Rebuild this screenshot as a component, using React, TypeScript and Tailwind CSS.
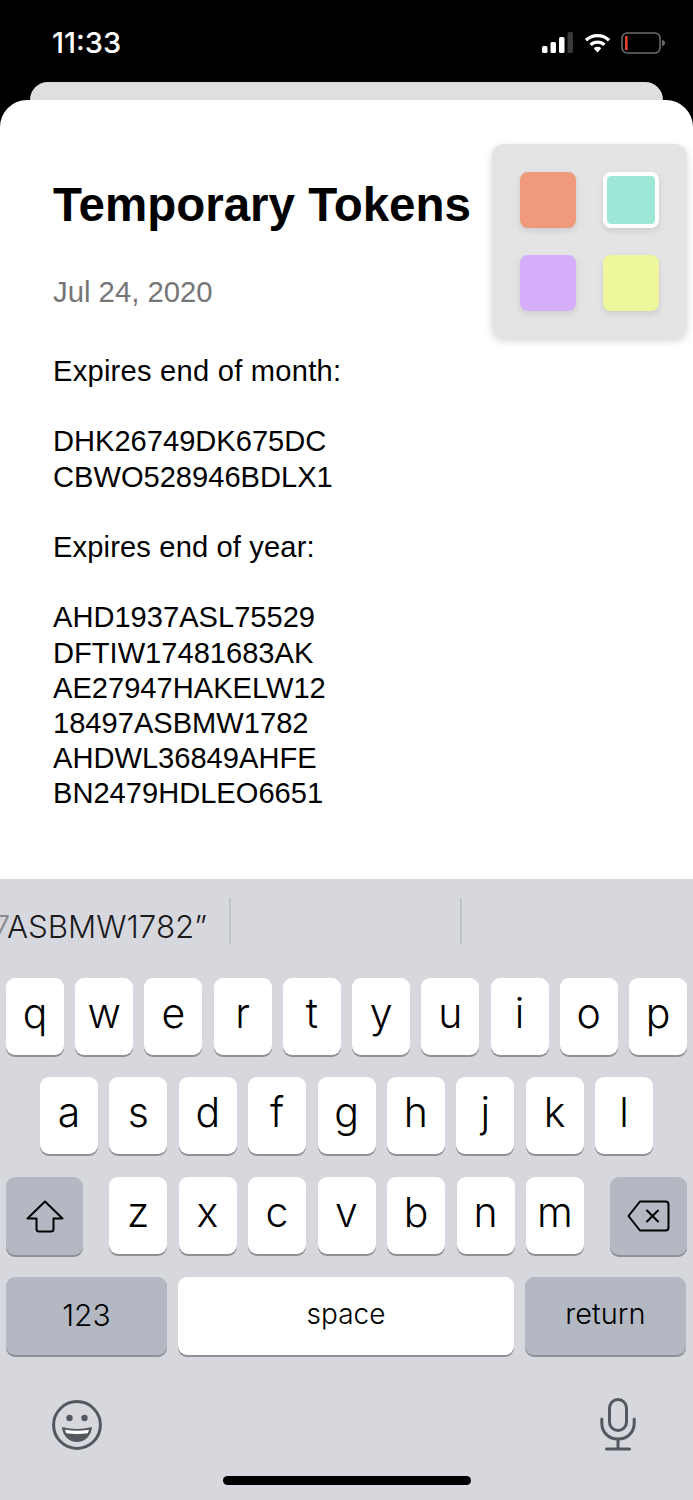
const sans = "font-['Liberation_Sans',Arial,sans-serif]";
const kbFont = "font-['Inter',sans-serif]";

const letterKey =
  "flex h-[77px] w-[58px] items-center justify-center rounded-[9px] bg-white pb-[6px] text-[41px] font-light text-black shadow-[0_2px_0_#8f9196]";
const grayKey =
  "flex h-[78px] items-center justify-center rounded-[9px] bg-[#b3b8c2] shadow-[0_2px_0_#8f9196]";

function Key({ label }: { label: string }) {
  return <div className={letterKey}>{label}</div>;
}

function StatusIcons() {
  return (
    <div className="flex items-center">
      <svg className="mr-[10px]" width="32" height="22" viewBox="0 0 32 22">
        <rect x="0" y="14" width="5.5" height="7" rx="1.5" fill="#fff" />
        <rect x="8.500" y="10" width="5.500" height="11" rx="1.5" fill="#fff" />
        <rect x="17" y="5" width="5.500" height="16" rx="1.5" fill="#fff" />
        <rect x="25.500" y="0" width="5.500" height="21" rx="1.5" fill="#3a3a3c" />
      </svg>
      <svg className="mr-[10px]" width="27" height="20" viewBox="0 0 24 18" fill="none" stroke="#fff" strokeWidth="3">
        <path d="M1.600 6.500a15 15 0 0 1 20.800 0" />
        <path d="M5.800 10.700a9 9 0 0 1 12.400 0" />
        <path d="M12 17.500l-3.400-3.800a5 5 0 0 1 6.800 0z" fill="#fff" stroke="none" />
      </svg>
      <svg width="44" height="22" viewBox="0 0 44 22" fill="none">
        <rect x="1" y="1" width="38" height="20" rx="5" stroke="#6c6c6e" strokeWidth="1.6" />
        <rect x="4" y="4" width="2.600" height="14" fill="#e5432f" />
        <path d="M41 8c2 .4 3 1.600 3 3s-1 2.600-3 3z" fill="#6c6c6e" />
      </svg>
    </div>
  );
}

function Swatch({ color, active }: { color: string; active?: boolean }) {
  return (
    <div
      className={`h-[56px] w-[56px] rounded-[8px] shadow-[0_3px_6px_rgba(0,0,0,0.1)] ${color} ${
        active ? "border-[4px] border-white" : ""
      }`}
    />
  );
}

const row1 = ["q", "w", "e", "r", "t", "y", "u", "i", "o", "p"];
const row2 = ["a", "s", "d", "f", "g", "h", "j", "k", "l"];
const row3 = ["z", "x", "c", "v", "b", "n", "m"];

export default function App() {
  return (
    <div className={`relative flex h-[1500px] w-[693px] flex-col overflow-hidden bg-black ${sans}`}>
      <div className="flex h-[82px] shrink-0 items-start justify-between pl-[52px] pr-[28px] pt-[26px]">
        <span className={`text-[29px] font-medium leading-[34px] text-white ${kbFont}`}>11:33</span>
        <div className="pt-[6px]">
          <StatusIcons />
        </div>
      </div>

      <div className="mx-[30px] h-[18px] shrink-0 rounded-t-[20px] bg-[#dfdfdf]" />

      <div className="relative flex h-[779px] shrink-0 flex-col rounded-t-[27px] bg-white pl-[53px] pt-[77px]">
        <h1 className="text-[47.500px] font-bold leading-[56px] text-black">Temporary Tokens</h1>
        <p className="mt-[41px] text-[29.300px] leading-[35px] text-[#767676]">Jul 24, 2020</p>
        <div className="mt-[45px] text-[29.100px] leading-[35.200px] text-black">
          <p className="tracking-[0.25px]">Expires end of month:</p>
          <p className="mt-[35.200px]">DHK26749DK675DC</p>
          <p>CBWO528946BDLX1</p>
          <p className="mt-[35.200px] tracking-[0.15px]">Expires end of year:</p>
          <p className="mt-[35.200px]">AHD1937ASL75529</p>
          <p>DFTIW17481683AK</p>
          <p>AE27947HAKELW12</p>
          <p>18497ASBMW1782</p>
          <p>AHDWL36849AHFE</p>
          <p>BN2479HDLEO6651</p>
        </div>

        <div className="absolute left-[492px] top-[44px] grid h-[194px] w-[195px] grid-cols-[56px_56px] content-start gap-x-[27px] gap-y-[27px] rounded-[12px] bg-[#e4e4e4] pl-[28px] pt-[28px] shadow-[0_3px_8px_rgba(0,0,0,0.16)]">
          <Swatch color="bg-[#f0997c]" />
          <Swatch color="bg-[#9ee7d7]" active />
          <Swatch color="bg-[#d5aefb]" />
          <Swatch color="bg-[#eef79b]" />
        </div>
      </div>

      <div className={`relative flex flex-1 flex-col bg-[#d6d8de] ${kbFont}`}>
        <div className="flex h-[99px] shrink-0 items-start overflow-hidden pt-[19px]">
          <div className="relative h-[46px] w-[231px] shrink-0 overflow-hidden border-r-2 border-[#c0c3ca]">
            <span className="absolute right-[22px] top-[9px] whitespace-nowrap text-[31.300px] font-light leading-[40px] text-[#1c1c1e]">
              <span className="text-[#8a8a8e]">7</span>ASBMW1782”
            </span>
          </div>
          <div className="h-[46px] w-[231px] shrink-0 border-r-2 border-[#c0c3ca]" />
        </div>

        <div className="flex justify-between px-[6px]">
          {row1.map((k) => (
            <Key key={k} label={k} />
          ))}
        </div>

        <div className="mt-[22px] flex justify-between px-[40px]">
          {row2.map((k) => (
            <Key key={k} label={k} />
          ))}
        </div>

        <div className="mt-[23px] flex items-start justify-between px-[6px]">
          <div className={`${grayKey} w-[77px]`}>
            <svg width="38" height="33" viewBox="0 0 38 33" fill="none" stroke="#000" strokeWidth="2" strokeLinejoin="round">
              <path d="M19 1.500L1.500 18.500h9v10.500a2.500 2.500 0 0 0 2.500 2.500h12a2.500 2.500 0 0 0 2.500-2.500V18.500h9z" />
            </svg>
          </div>
          <div className="flex gap-[11.500px]">
            {row3.map((k) => (
              <Key key={k} label={k} />
            ))}
          </div>
          <div className={`${grayKey} w-[77px]`}>
            <svg width="43" height="32" viewBox="0 0 43 32" fill="none" stroke="#000" strokeWidth="2" strokeLinejoin="round">
              <path d="M13 1.500h25.500a3 3 0 0 1 3 3v23a3 3 0 0 1-3 3H13L1.500 16z" />
              <path d="M20 10.500l11 11M31 10.500l-11 11" strokeLinecap="round" />
            </svg>
          </div>
        </div>

        <div className="mt-[22px] flex gap-[11px] px-[6px]">
          <div className={`${grayKey} w-[161px] pb-[1px] text-[30px] font-light text-black`}>123</div>
          <div className={`${grayKey} w-[336px] bg-white pb-[5px] text-[28px] font-light text-black`}>space</div>
          <div className={`${grayKey} w-[161px] pb-[5px] text-[29px] font-light text-black`}>return</div>
        </div>

        <div className="flex items-start justify-between pl-[52px] pr-[57px] pt-[44px]">
          <svg className="mt-[1px]" width="50" height="50" viewBox="0 0 50 50" fill="none">
            <circle cx="25" cy="25" r="23.400" stroke="#54585e" strokeWidth="3" />
            <circle cx="17.500" cy="18" r="3.200" fill="#54585e" />
            <circle cx="32.500" cy="18" r="3.200" fill="#54585e" />
            <path d="M10 27c10 2.600 20 2.600 30 0 -.6 9-7.500 15-15 15S10.600 36 10 27z" fill="#54585e" />
            <path d="M13 29.800c8 1.400 16 1.400 24 0-.3 1.200-.8 2.300-1.400 3.400-7 1-14.200 1-21.200 0-.6-1.100-1.100-2.200-1.400-3.400z" fill="#fff" />
          </svg>
          <svg className="-mt-[1px]" width="36" height="53" viewBox="0 0 36 53" fill="none" stroke="#54585e" strokeWidth="3" strokeLinecap="round">
            <rect x="9.500" y="1.500" width="17" height="31" rx="8.500" />
            <path d="M1.800 21v4c0 9.500 7 16 16.200 16S34.200 34.500 34.200 25v-4" />
            <path d="M18 41.500v9.500M6.500 51h23" />
          </svg>
        </div>

        <div className="absolute bottom-[15px] left-[223px] h-[9px] w-[248px] rounded-full bg-black" />
      </div>
    </div>
  );
}
